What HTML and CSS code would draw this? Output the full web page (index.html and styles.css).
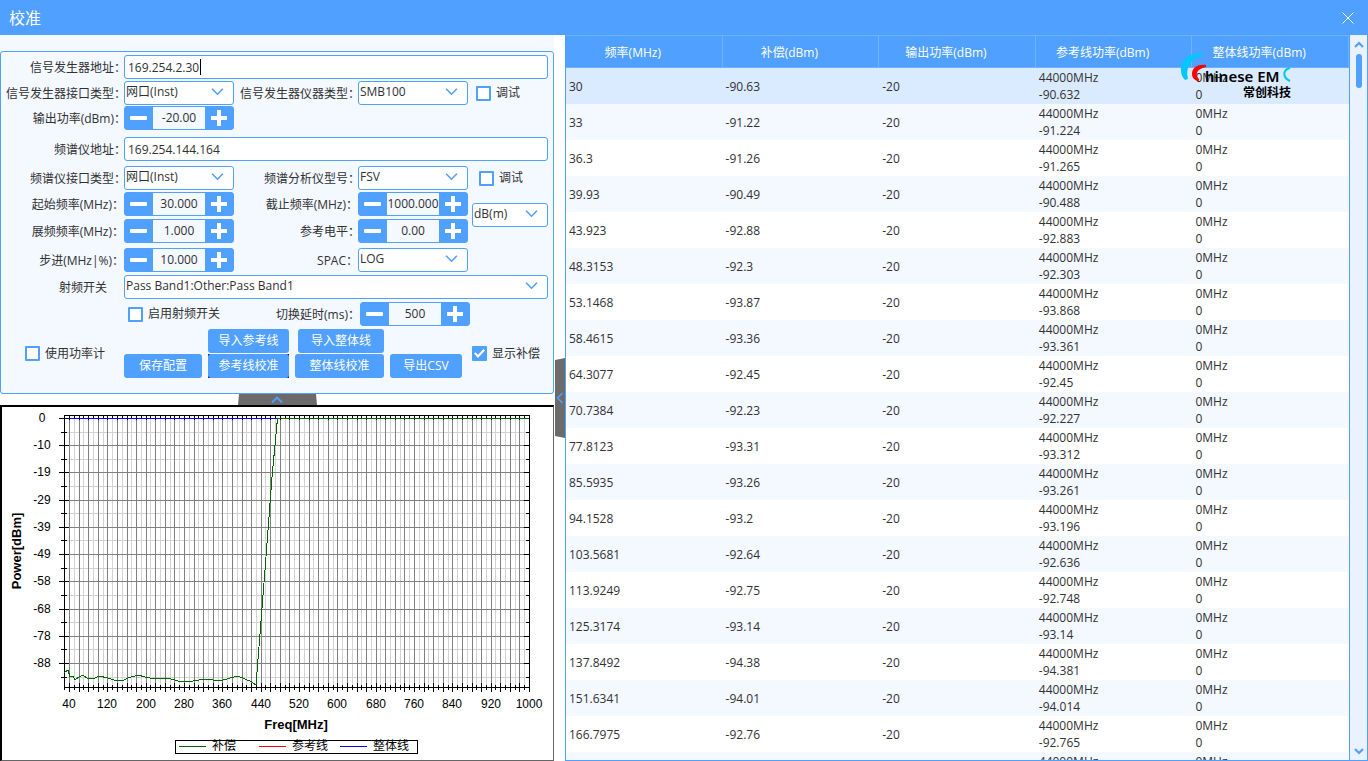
FILE: index.html
```html
<!DOCTYPE html>
<html lang="zh-CN">
<head>
<meta charset="utf-8">
<title>校准</title>
<link rel="stylesheet" href="styles.css">
</head>
<body>
<svg class="symbols" aria-hidden="true">
  <symbol id="down" viewBox="0 0 12 8"><path d="M1 1.5 6 6.5 11 1.5" fill="none" stroke="currentColor" stroke-width="1.5"/></symbol>
  <symbol id="up" viewBox="0 0 12 8"><path d="M1 6.5 6 1.5 11 6.5" fill="none" stroke="currentColor" stroke-width="1.8"/></symbol>
  <symbol id="up-bold" viewBox="0 0 10 8"><path d="M1 6 5 2 9 6" fill="none" stroke="currentColor" stroke-width="2.2"/></symbol>
  <symbol id="down-bold" viewBox="0 0 10 8"><path d="M1 2 5 6 9 2" fill="none" stroke="currentColor" stroke-width="2.2"/></symbol>
  <symbol id="left" viewBox="0 0 8 12"><path d="M6.500 1 1.500 6 6.500 11" fill="none" stroke="currentColor" stroke-width="1.500"/></symbol>
  <symbol id="minus" viewBox="0 0 17 17"><rect x="0" y="6" width="17" height="4" rx="1" fill="currentColor"/></symbol>
  <symbol id="plus" viewBox="0 0 17 17"><path d="M7 0h4v6h6v4h-6v6H7v-6H1V6h6z" fill="currentColor"/></symbol>
  <symbol id="cross" viewBox="0 0 12 12"><path d="M.5.5 11.500 11.500M11.500.5.5 11.500" stroke="currentColor" fill="none"/></symbol>
</svg>
<header class="titlebar">
  <h1 class="title">校准</h1>
  <button class="close" type="button" aria-label="关闭"><svg width="12" height="12"><use href="#cross"/></svg></button>
</header>
<main class="main">
  <section class="side">
    <form class="panel">
      <div class="row">
        <label class="lbl" for="genAddr">信号发生器地址：</label>
        <div class="field wide"><input class="text" id="genAddr" value="169.254.2.30"><span class="caret"></span></div>
      </div>
      <div class="row gap-s">
        <label class="lbl" for="genIf">信号发生器接口类型：</label>
        <div class="pick"><select id="genIf"><option>网口(Inst)</option></select><svg class="chev"><use href="#down"/></svg></div>
        <label class="lbl" for="genType">信号发生器仪器类型：</label>
        <div class="pick"><select id="genType"><option>SMB100</option></select><svg class="chev"><use href="#down"/></svg></div>
        <label class="check debug"><input type="checkbox">调试</label>
      </div>
      <div class="row gap-xs">
        <label class="lbl" for="outPow">输出功率(dBm)：</label>
        <div class="spin"><button type="button" aria-label="减"><svg><use href="#minus"/></svg></button><input id="outPow" value="-20.00"><button type="button" aria-label="加"><svg><use href="#plus"/></svg></button></div>
      </div>
      <div class="row gap-l">
        <label class="lbl" for="saAddr">频谱仪地址：</label>
        <div class="field wide"><input class="text" id="saAddr" value="169.254.144.164"></div>
      </div>
      <div class="row gap-m">
        <label class="lbl" for="saIf">频谱仪接口类型：</label>
        <div class="pick"><select id="saIf"><option>网口(Inst)</option></select><svg class="chev"><use href="#down"/></svg></div>
        <label class="lbl" for="saType">频谱分析仪型号：</label>
        <div class="pick"><select id="saType"><option>FSV</option></select><svg class="chev"><use href="#down"/></svg></div>
        <label class="check debug2"><input type="checkbox">调试</label>
      </div>
      <div class="row gap-s">
        <label class="lbl inset" for="fStart">起始频率(MHz)：</label>
        <div class="spin"><button type="button" aria-label="减"><svg><use href="#minus"/></svg></button><input id="fStart" value="30.000"><button type="button" aria-label="加"><svg><use href="#plus"/></svg></button></div>
        <label class="lbl inset" for="fStop">截止频率(MHz)：</label>
        <div class="spin"><button type="button" aria-label="减"><svg><use href="#minus"/></svg></button><input id="fStop" value="1000.000"><button type="button" aria-label="加"><svg><use href="#plus"/></svg></button></div>
        <div class="pick unit"><select aria-label="单位"><option>dB(m)</option></select><svg class="chev"><use href="#down"/></svg></div>
        <label class="lbl inset" for="fSpan">展频频率(MHz)：</label>
        <div class="spin"><button type="button" aria-label="减"><svg><use href="#minus"/></svg></button><input id="fSpan" value="1.000"><button type="button" aria-label="加"><svg><use href="#plus"/></svg></button></div>
        <label class="lbl" for="refLv">参考电平：</label>
        <div class="spin"><button type="button" aria-label="减"><svg><use href="#minus"/></svg></button><input id="refLv" value="0.00"><button type="button" aria-label="加"><svg><use href="#plus"/></svg></button></div>
      </div>
      <div class="row gap-m">
        <label class="lbl inset" for="step">步进(MHz|%)：</label>
        <div class="spin"><button type="button" aria-label="减"><svg><use href="#minus"/></svg></button><input id="step" value="10.000"><button type="button" aria-label="加"><svg><use href="#plus"/></svg></button></div>
        <label class="lbl inset" for="spac">SPAC：</label>
        <div class="pick"><select id="spac"><option>LOG</option></select><svg class="chev"><use href="#down"/></svg></div>
      </div>
      <div class="row gap-n">
        <label class="lbl plain" for="rfSw">射频开关</label>
        <div class="pick wide"><select id="rfSw"><option>Pass Band1:Other:Pass Band1</option></select><svg class="chev"><use href="#down"/></svg></div>
      </div>
      <div class="row delay gap-n">
        <label class="check rf"><input type="checkbox">启用射频开关</label>
        <label class="lbl inset" for="delay">切换延时(ms)：</label>
        <div class="spin"><button type="button" aria-label="减"><svg><use href="#minus"/></svg></button><input id="delay" value="500"><button type="button" aria-label="加"><svg><use href="#plus"/></svg></button></div>
      </div>
      <div class="actions">
        <label class="check meter"><input type="checkbox">使用功率计</label>
        <div class="buttons">
          <div class="line upper">
            <button class="btn b-ref" type="button">导入参考线</button>
            <button class="btn b-all" type="button">导入整体线</button>
          </div>
          <div class="line">
            <button class="btn b-save" type="button">保存配置</button>
            <span class="current"><button class="btn b-ref" type="button">参考线校准</button></span>
            <button class="btn b-cal" type="button">整体线校准</button>
            <button class="btn b-csv" type="button">导出CSV</button>
          </div>
        </div>
        <label class="check show"><input type="checkbox" checked>显示补偿</label>
      </div>
    </form>
    <div class="fold"><button class="fold-btn" type="button" aria-label="收起"><svg width="12" height="8"><use href="#up"/></svg></button></div>
    <div class="chart">
      <svg id="chart" viewBox="0 0 551 353" role="img" aria-label="Power / Freq"></svg>
    </div>
  </section>
  <div class="gutter"><button class="gutter-btn" type="button" aria-label="收起"><svg width="8" height="12"><use href="#left"/></svg></button></div>
  <section class="grid">
    <div class="scroll">
      <table class="data">
        <thead><tr><th>频率(MHz)</th><th>补偿(dBm)</th><th>输出功率(dBm)</th><th>参考线功率(dBm)</th><th>整体线功率(dBm)</th></tr></thead>
        <tbody id="rows"></tbody>
      </table>
    </div>
    <div class="bar">
      <svg class="arrow" width="10" height="8"><use href="#up-bold"/></svg>
      <div class="track"><div class="thumb"></div></div>
      <svg class="arrow" width="10" height="8"><use href="#down-bold"/></svg>
    </div>
    <svg class="logo" width="116" height="48" viewBox="0 0 116 48" aria-label="Chinese EMC 常创科技">
      <path d="M24 1C10 1 1 8 2 19c0 4 2 7 4 9l3-1C6 16 11 7 24 3z" fill="#00c8ff"/>
      <path d="M27 13c-9-1-14 3-14 9 0 4 3 7 7 7v-2c-4-4-3-10 7-12z" fill="#f00"/>
      <text x="26" y="30" class="brand">hinese EM</text>
      <path d="M111 16c-8 2-7 10 0 13" fill="none" stroke="#00c8e8" stroke-width="2"/>
      <text x="64" y="45" class="brand-cn">常创科技</text>
    </svg>
  </section>
</main>
<script src="script.js"></script>
</body>
</html>
```
FILE: styles.css
```css
* { box-sizing: border-box; }
body {
  margin: 0;
  height: 100vh;
  display: flex;
  flex-direction: column;
  overflow: hidden;
  background: #fff;
  color: #303133;
  font: 12px/16px "Open Sans", "Noto Sans CJK SC", sans-serif;
}
button, input, select { font: inherit; color: inherit; margin: 0; }
button { cursor: pointer; border: 0; padding: 0; }
.symbols { position: absolute; width: 0; height: 0; }

.titlebar {
  height: 35px;
  flex: none;
  display: flex;
  align-items: center;
  justify-content: space-between;
  padding: 0 14px 0 9px;
  background: #50a0ff;
  color: #fff;
}
.title { margin: 0; font-size: 16px; line-height: 24px; font-weight: 400; }
.close { display: flex; background: none; color: #fff; }

.main { flex: 1; min-height: 0; display: flex; }
.side { flex: none; width: 554px; display: flex; flex-direction: column; }
.panel {
  padding: 3px 5px 15px 1px;
  border: 1px solid #50a0ff;
  border-radius: 3px;
  background: #f4f8ff;
  margin: 0;
}
.side::before { content: ""; height: 16px; background: #f4f8ff; }

.row {
  display: grid;
  grid-template-columns: 118px 110px 116px 110px 1fr;
  column-gap: 4px;
  row-gap: 3px;
  align-items: center;
}
.gap-xs { margin-top: 1px; }
.gap-s { margin-top: 2px; }
.gap-n { margin-top: 3px; }
.gap-m { margin-top: 5px; }
.gap-l { margin-top: 7px; }
.delay { grid-template-columns: 232px 118px 110px; }
.lbl { justify-self: end; margin-right: -6px; padding-top: 2px; white-space: nowrap; }
.lbl.inset { margin-right: -4px; }
.lbl.plain { margin-right: 13px; }
.wide { grid-column: 2 / -1; }

.field { position: relative; height: 24px; }
.text {
  display: block;
  height: 24px;
  width: 100%;
  padding: 0 3px;
  border: 1px solid #50a0ff;
  border-radius: 3px;
  background: #fff;
  outline: 0;
}
.caret { position: absolute; left: 76px; top: 4px; width: 1px; height: 16px; background: #000; }
.pick { position: relative; height: 24px; }
.pick select {
  appearance: none;
  width: 100%;
  height: 24px;
  padding: 0 1px 3px;
  border: 1px solid #50a0ff;
  border-radius: 3px;
  background: #fff;
}
.chev { position: absolute; right: 10px; top: 6px; width: 13px; height: 9px; color: #50a0ff; pointer-events: none; }
.unit { grid-column: 5; grid-row: 1 / 3; align-self: start; margin-top: 11px; }

.spin { display: flex; height: 24px; border: 1px solid #50a0ff; border-radius: 3px; background: #50a0ff; }
.spin button { flex: 0 0 28px; display: flex; align-items: center; justify-content: center; padding-right: 1px; background: none; color: #fff; }
.spin svg { width: 17px; height: 17px; }
.spin input { flex: 1; min-width: 0; border: 0; padding: 0; text-align: center; background: #f4f8ff; outline: 0; }

.check { display: flex; align-items: center; gap: 5px; white-space: nowrap; }
.check input {
  appearance: none;
  width: 15px;
  height: 15px;
  border: 2px solid #50a0ff;
  border-radius: 1px;
  background: #fff;
}
.check input:checked { background: #50a0ff; }
.check input:checked::before {
  content: "";
  display: block;
  width: 11px;
  height: 11px;
  background: #fff;
  clip-path: polygon(0 50%, 14% 38%, 36% 62%, 86% 8%, 100% 22%, 36% 92%);
}
.debug { padding-left: 4px; }
.debug2 { padding-left: 7px; }
.rf { padding-left: 126px; }

.actions { display: flex; align-items: center; margin-top: 3px; }
.meter { flex: 0 0 122px; padding-left: 23px; }
.buttons { flex: 0 0 348px; display: flex; flex-direction: column; gap: 1px; }
.line { display: flex; gap: 6px; }
.upper { padding-left: 84px; gap: 9px; }
.btn { height: 24px; border-radius: 3px; background: #50a0ff; color: #fff; }
.current { display: flex; background: #001a80; }
.b-ref { width: 81px; }
.b-all { width: 86px; }
.b-save { width: 78px; }
.b-cal { width: 89px; }
.b-csv { width: 72px; }

.fold { flex: none; height: 11px; display: flex; justify-content: center; }
.fold-btn {
  width: 80px;
  display: flex;
  align-items: center;
  justify-content: center;
  background: #6b6b6b;
  color: #50a0ff;
  clip-path: polygon(2px 0, 79px 0, 100% 100%, 1px 100%);
}
.chart {
  flex: 1;
  min-height: 0;
  border: solid #666;
  border-width: 2px 1px 1px 2px;
  border-top-color: #000;
  border-left-color: #000;
  background: #fff;
}
.chart svg { display: block; width: 100%; height: 100%; }
.chart text { font: 12px "Liberation Sans", "Noto Sans CJK SC", sans-serif; fill: #000; text-anchor: middle; }
.chart .axis { font-weight: 700; font-size: 13px; }

.gutter { flex: none; width: 11px; display: flex; align-items: center; }
.gutter-btn {
  width: 11px;
  height: 80px;
  display: flex;
  align-items: center;
  justify-content: center;
  background: #6b6b6b;
  color: #50a0ff;
  clip-path: polygon(1px 2px, 100% 0, 100% 100%, 1px 78px);
}

.grid { position: relative; flex: 1; min-width: 0; display: flex; border: 1px solid #50a0ff; border-width: 0 1px 1px; }
.scroll { flex: 1; overflow: hidden; border-right: 1px solid #50a0ff; }
.data { width: 100%; table-layout: fixed; border-collapse: separate; border-spacing: 0; }
.data th {
  height: 33px;
  padding: 3px 22px 0 0;
  font-weight: 400;
  white-space: nowrap;
  color: #fff;
  background: #50a0ff;
  border: solid #6cb2ff;
  border-width: 1px 1px 1px 0;
}
.data td { height: 36px; padding: 1px 3px; line-height: 17px; vertical-align: middle; }
.data tr:nth-child(even) td { background: #f4f8ff; }
.data tbody tr:first-child td { background: #dbebff; }
.bar { flex: none; width: 17px; display: flex; flex-direction: column; align-items: center; padding: 6px 0 5px; background: #eaf2ff; color: #50a0ff; }
.track { flex: 1; padding-top: 5px; }
.thumb { width: 6px; height: 34px; border-radius: 3px; background: #50a0ff; }
.arrow { flex: none; }
.logo { position: absolute; right: 72px; top: 17px; }
.brand { font: 600 15px "Noto Sans", sans-serif; fill: #000; }
.brand-cn { font: 700 12px "Noto Sans CJK SC", sans-serif; fill: #000; }
```
FILE: script.js
```js
// Measurement table: frequency, compensation, reference value.
const data = [
  ["30", "-90.63", "-90.632"], ["33", "-91.22", "-91.224"], ["36.3", "-91.26", "-91.265"],
  ["39.93", "-90.49", "-90.488"], ["43.923", "-92.88", "-92.883"], ["48.3153", "-92.3", "-92.303"],
  ["53.1468", "-93.87", "-93.868"], ["58.4615", "-93.36", "-93.361"], ["64.3077", "-92.45", "-92.45"],
  ["70.7384", "-92.23", "-92.227"], ["77.8123", "-93.31", "-93.312"], ["85.5935", "-93.26", "-93.261"],
  ["94.1528", "-93.2", "-93.196"], ["103.5681", "-92.64", "-92.636"], ["113.9249", "-92.75", "-92.748"],
  ["125.3174", "-93.14", "-93.14"], ["137.8492", "-94.38", "-94.381"], ["151.6341", "-94.01", "-94.014"],
  ["166.7975", "-92.76", "-92.765"], ["", "", "&nbsp;"]
];
document.getElementById("rows").innerHTML = data.map(([f, c, r]) =>
  `<tr><td>${f}</td><td>${c}</td><td>${f && "-20"}</td><td>44000MHz<br>${r}</td><td>0MHz<br>${f ? "0" : "&nbsp;"}</td></tr>`).join("");

// Chart: plot area and scales in viewBox units.
const L = 62, R = 527, T = 8, B = 280, X0 = 67, Y0 = 11;
const out = [];
const line = (x1, y1, x2, y2, color) =>
  out.push(`<path d="M${x1} ${y1}L${x2} ${y2}" stroke="${color}" fill="none"/>`);
const px = v => Math.round(v) + 0.5;
const xs = [], ys = [];
for (let i = -1; i <= 96; i++) xs.push({ x: px(X0 + i * 460 / 96), major: i % 2 === 0, i });
for (let j = 0; j <= 19; j++) ys.push({ y: px(Y0 + j * 13.61), major: j % 2 === 0, j });
for (const major of [false, true]) {
  const color = major ? "#808080" : "#d3d3d3";
  xs.filter(t => t.major === major).forEach(t => line(t.x, T, t.x, B, color));
  ys.filter(t => t.major === major).forEach(t => line(L, t.y, R, t.y, color));
}
xs.forEach(t => {
  const n = t.major ? 5 : 3;
  line(t.x, B - n + 1, t.x, B + n, "#000");
  line(t.x, T, t.x, T + n, "#000");
  if (t.i % 8 === 0) out.push(`<text x="${t.x - 0.5}" y="301">${40 + t.i * 10}</text>`);
});
const names = ["0", "-10", "-19", "-29", "-39", "-49", "-58", "-68", "-78", "-88"];
ys.forEach(t => {
  const n = t.major ? 5 : 3;
  line(L - n, t.y, L + n, t.y, "#000");
  line(R - n, t.y, R, t.y, "#000");
  if (t.major) out.push(`<text x="40" y="${t.y + 3}">${names[t.j / 2]}</text>`);
});
out.push(`<rect x="${L + 0.5}" y="${T + 0.5}" width="${R - L}" height="${B - T}" fill="none" stroke="#000"/>`);
line(X0, 11.5, 275, 11.5, "#00f");
const pts = "62,266 66,263 68,270 71,269 73,273 77,270 81,268 85,271 93,271 97,269 106,271 115,274 122,273 126,271 136,268 143,270 153,272 166,271 176,274 191,274 203,272 218,274 228,271 236,269 250,275 254,278 263,163 270,70 275.5,11.5 527,11.5";
out.push(`<polyline points="${pts}" fill="none" stroke="#006400" shape-rendering="crispEdges"/>`);
out.push('<text class="axis" x="294" y="322">Freq[MHz]</text>');
out.push('<text class="axis" transform="translate(19 144) rotate(-90)">Power[dBm]</text>');
out.push('<rect x="173.5" y="333.5" width="242" height="13" fill="#fff" stroke="#000"/>');
[["#006400", 177, "补偿", 222], ["#f00", 257, "参考线", 308], ["#00f", 338, "整体线", 389]].forEach(([c, x, name, tx]) => {
  line(x, 339.5, x + 27, 339.5, c);
  out.push(`<text x="${tx}" y="343">${name}</text>`);
});
document.getElementById("chart").innerHTML = out.join("");
```
